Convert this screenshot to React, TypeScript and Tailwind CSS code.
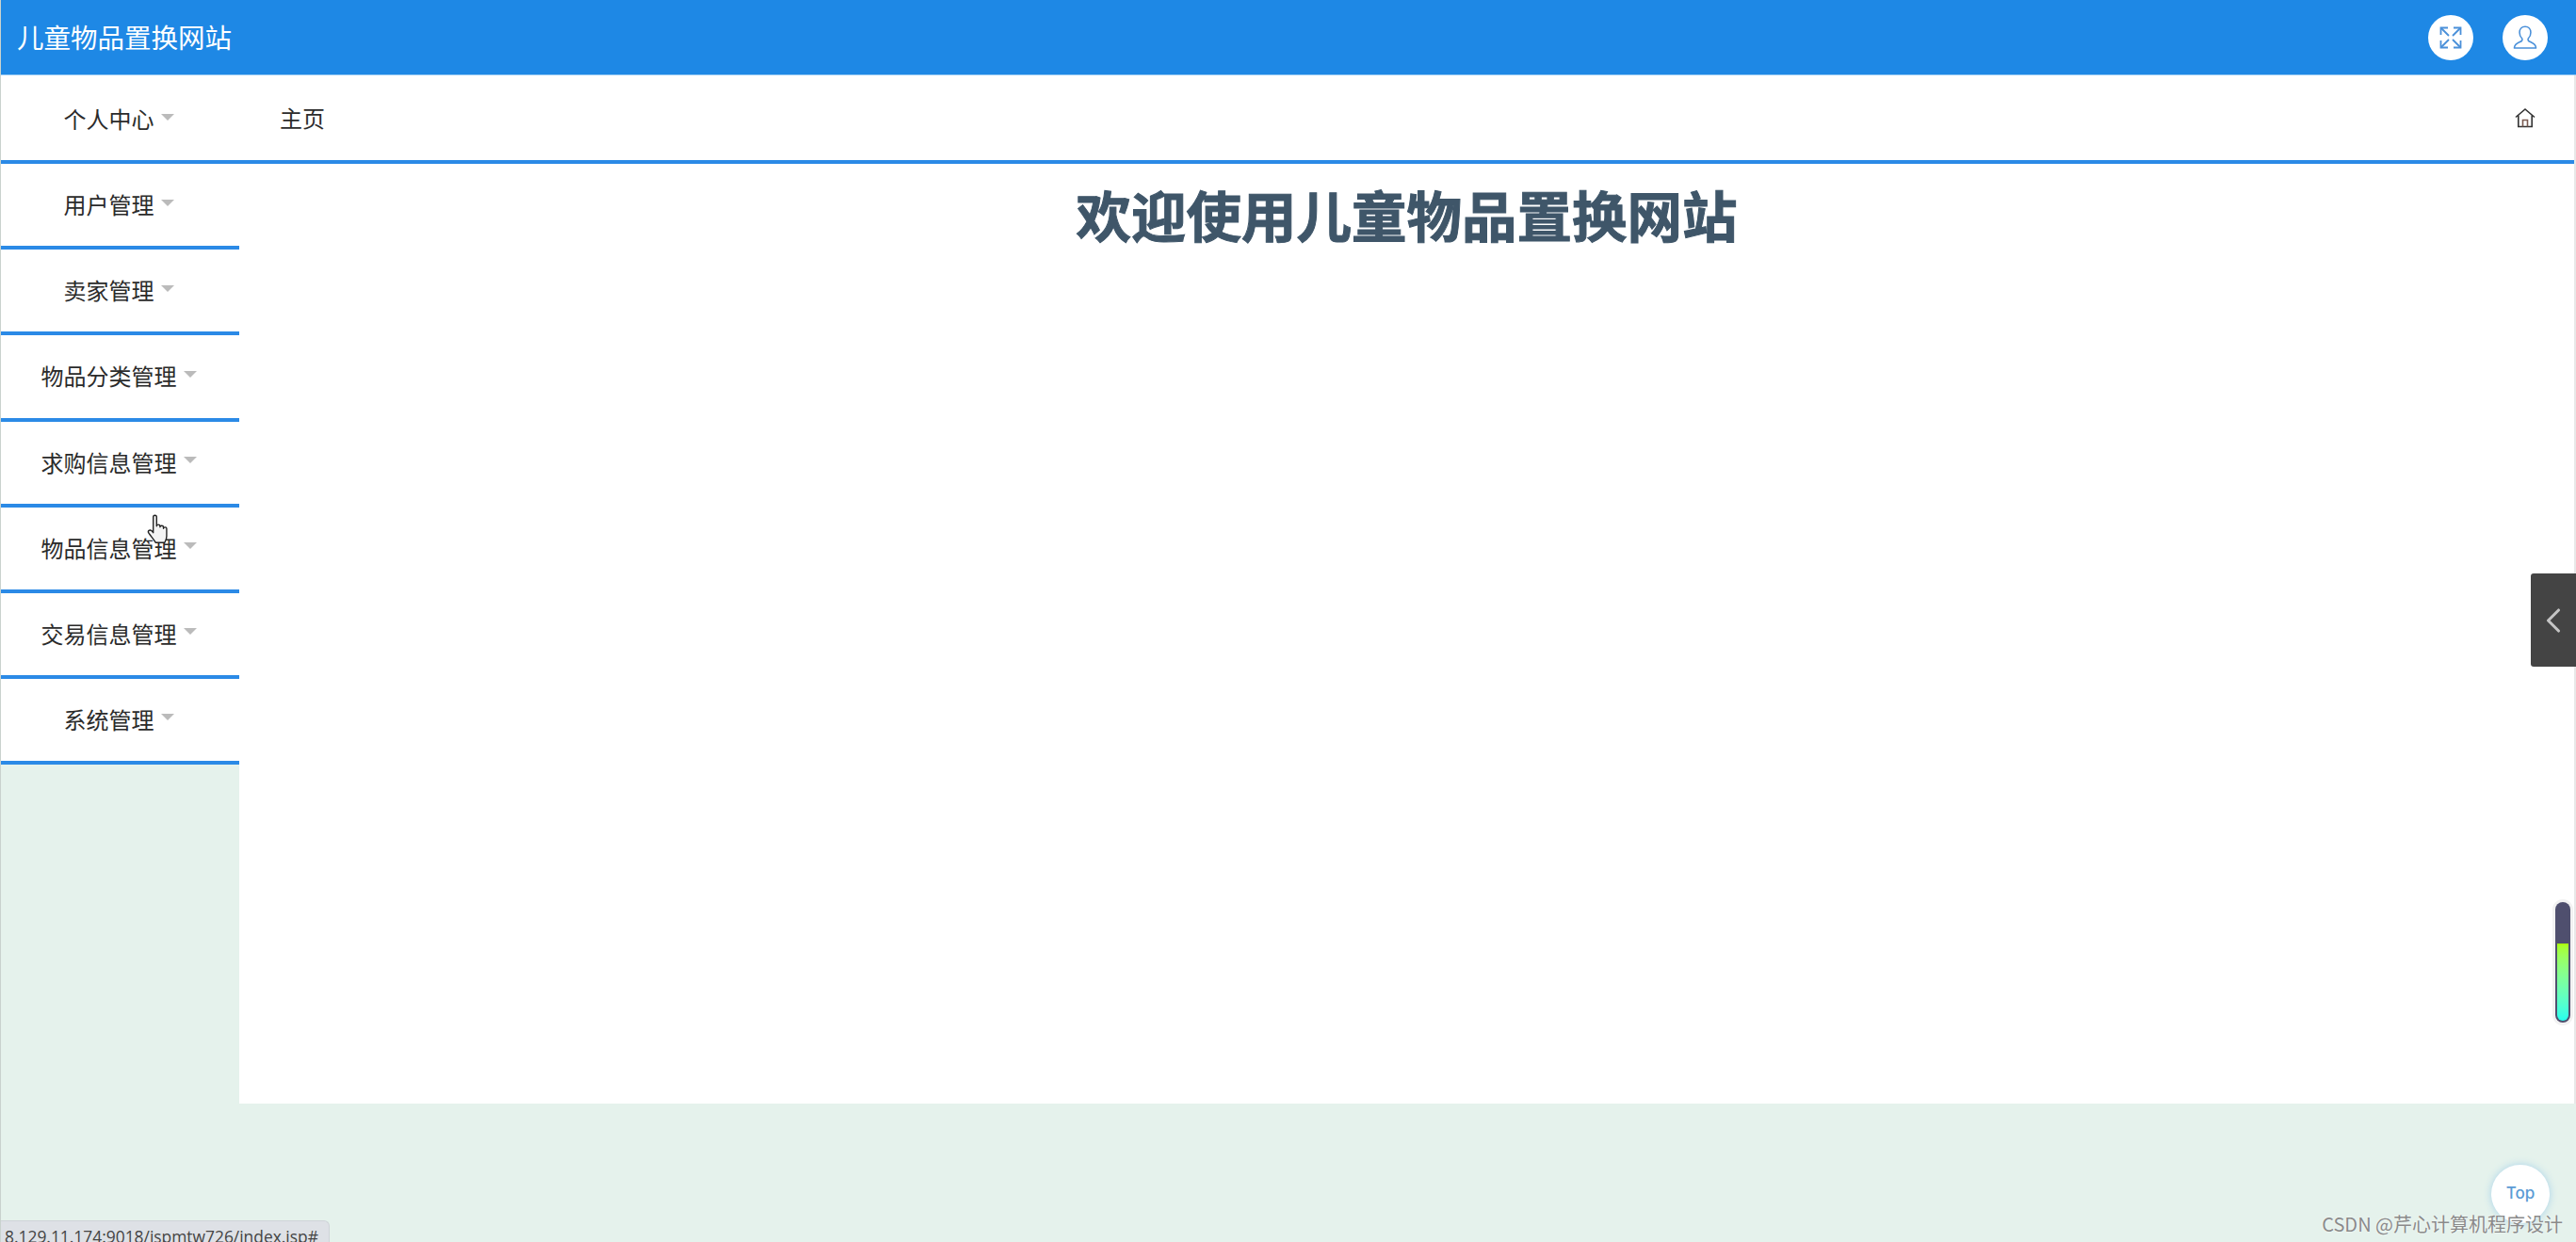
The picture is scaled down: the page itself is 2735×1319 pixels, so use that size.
import { ChevronLeft } from 'lucide-react';

const menus = ['个人中心', '用户管理', '卖家管理', '物品分类管理', '求购信息管理', '物品信息管理', '交易信息管理', '系统管理'];

function ExpandIcon() {
  return (
    <svg viewBox="0 0 26 26" className="w-[26px] h-[26px] text-[#4a90d9]" fill="none" stroke="currentColor" strokeWidth="1.8">
      <path d="M3 3l8 8M23 3l-8 8M3 23l8-8M23 23l-8-8" />
      <path d="M2.500 10V2.500H10M16 2.500h7.500V10M2.500 16v7.500H10M16 23.500h7.500V16" />
    </svg>
  );
}

function UserIcon() {
  return (
    <svg viewBox="0 0 32 32" className="w-[28px] h-[28px] text-[#4a90d9]" fill="none" stroke="currentColor" strokeWidth="1.8" strokeLinejoin="round">
      <path d="M16 2.500c-4.200 0-6.800 3-6.800 7.200 0 3 1.200 5.600 2.900 7.200.6.6.6 2.600-.6 3.400-2.200 1.400-8.400 2.600-8.700 8.200h26.400c-.3-5.600-6.500-6.800-8.700-8.200-1.200-.8-1.200-2.800-.6-3.400 1.700-1.600 2.900-4.200 2.900-7.200 0-4.200-2.600-7.200-6.800-7.200z" />
    </svg>
  );
}

function HomeIcon() {
  return (
    <svg viewBox="0 0 22 22" className="w-[22px] h-[22px] text-[#333]" fill="none" stroke="currentColor" strokeWidth="1.600">
      <path d="M1 10.500L11 2l10 8.500" />
      <path d="M3.800 8.500V20.500h14.400V8.500" />
      <path d="M8.500 20.500v-7h5v7" stroke="#7a5a50" />
    </svg>
  );
}

function HandCursor() {
  return (
    <svg viewBox="0 0 24 32" className="absolute left-[154px] top-[546px] w-[26px] h-[34px]" fill="#f4f4f4" stroke="#222" strokeWidth="1.3" strokeLinejoin="round">
      <path d="M7 3c0-2.400 3.400-2.400 3.400 0v9c0-2 3.400-2 3.400 0v1c0-2 3.400-2 3.400 0v1.400c0-1.800 3.200-1.800 3.200 0V22c0 3-1 4.600-2 6.500H9.500C8 26 5 22.500 2.500 19c-1.500-2.200 1-4 3-2.300L7 18.500z" />
    </svg>
  );
}

function App() {
  return (
    <div className="relative h-screen w-full overflow-hidden bg-[#e5f2ec] border-l border-l-[#c9d2ce] font-['Noto_Sans_CJK_SC',sans-serif] text-[#2b2b2b]">
      {/* top bar */}
      <div className="flex h-[80px] items-center justify-between border-b border-b-[#8cc4f2] bg-[#1e88e5] pl-[18px] pr-[30px] -ml-px">
        <div className="text-[28.5px] leading-none text-white">儿童物品置换网站</div>
        <div className="flex gap-[31px]">
          <div className="flex h-[48px] w-[48px] items-center justify-center rounded-full bg-white">
            <ExpandIcon />
          </div>
          <div className="flex h-[48px] w-[48px] items-center justify-center rounded-full bg-white">
            <UserIcon />
          </div>
        </div>
      </div>

      <div className="flex h-[1092px] border-r-2 border-r-[#e8e8e8]">
        {/* side bar */}
        <div className="w-[253px] shrink-0">
          <div className="bg-white pt-[3px]">
            {menus.map((m) => (
              <div key={m} className="flex h-[91.14px] items-center justify-center gap-[7px] border-b-[4px] border-b-[#2b8ae6] pb-[1px] pr-[3px] text-[24px]">
                <span>{m}</span>
                <span className="mb-[4px] h-0 w-0 border-x-[7px] border-t-[7px] border-x-transparent border-t-[#bbbbbb]" />
              </div>
            ))}
          </div>
        </div>

        {/* main */}
        <div className="flex-1 bg-white">
          <div className="flex h-[94px] items-center justify-between border-b-[4px] border-b-[#2b8ae6] pl-[43px] pr-[41px]">
            <span className="text-[24px]">主页</span>
            <HomeIcon />
          </div>
          <h1 className="pt-[10px] text-center text-[58.5px] font-bold leading-[86px] text-[#3f5669] [-webkit-text-stroke:1px_#3f5669]">欢迎使用儿童物品置换网站</h1>
        </div>
      </div>

      <HandCursor />

      {/* right side drawer handle */}
      <div className="absolute right-0 top-[609px] flex h-[99px] w-[48px] items-center justify-center rounded-l-[3px] bg-[#444444]">
        <ChevronLeft size={44} strokeWidth={1.7} className="text-[#c4c4c4]" />
      </div>

      {/* scroll progress */}
      <div className="absolute right-[6px] top-[958px] h-[128px] w-[16px] overflow-hidden rounded-full bg-[#4f4f6e] shadow-[0_0_0_3px_#f2f2f2]">
        <div className="absolute bottom-[2px] left-[2px] top-[44px] w-[12px] rounded-b-full bg-gradient-to-b from-[#aaff00] to-[#22ffee]" />
      </div>

      {/* back to top */}
      <div className="absolute left-[2644px] top-[1237px] flex h-[62px] w-[62px] items-center justify-center rounded-full bg-white text-[17px] font-medium text-[#5b9bd5] shadow-[0_0_8px_#a9d3ea] font-['Inter',sans-serif]">
        Top
      </div>

      {/* csdn watermark */}
      <div className="absolute right-[14px] top-[1286px] text-[20px] leading-[28px] text-[#8a8a8a] [text-shadow:0_0_2px_#ffffff]">
        CSDN @芹心计算机程序设计
      </div>

      {/* browser status bubble */}
      <div className="absolute bottom-0 left-0 h-[23px] w-[349px] overflow-hidden rounded-tr-[6px] border-t border-r border-[#cfd3d8] bg-[#dee1e6] pl-[4px] font-['Open_Sans',sans-serif] text-[17.4px] leading-[32px] text-[#444]">
        8.129.11.174:9018/jspmtw726/index.jsp#
      </div>
    </div>
  );
}

export default App;
